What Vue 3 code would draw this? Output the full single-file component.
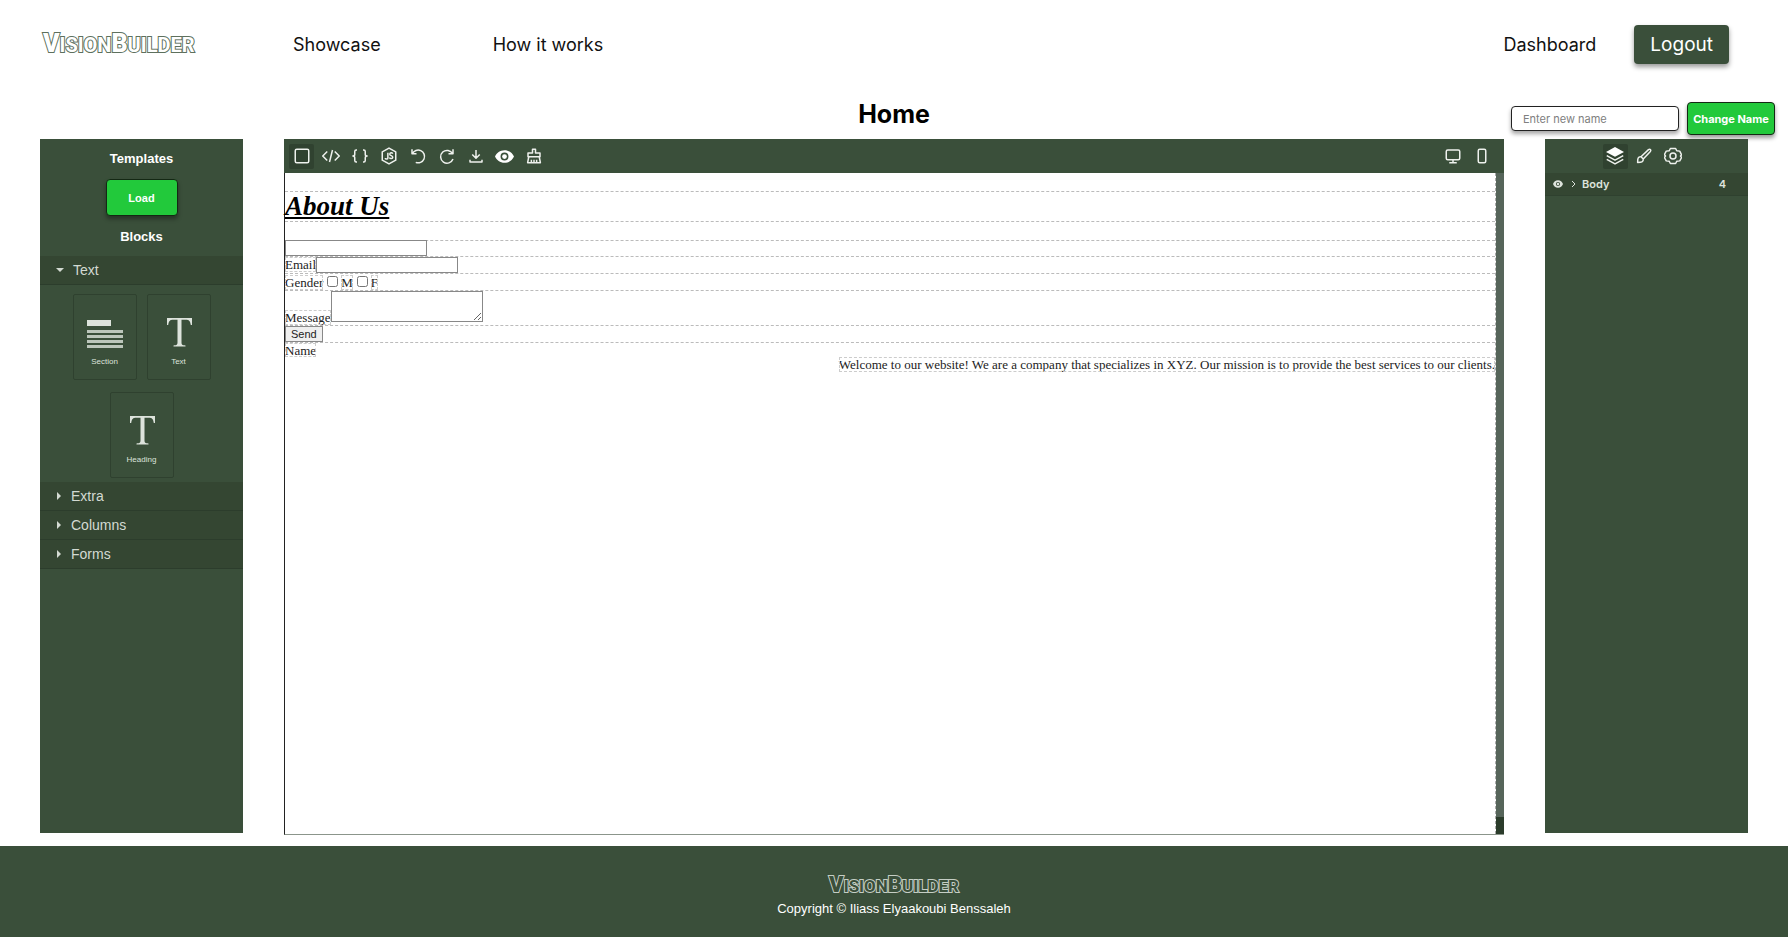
<script setup>
import { ref } from 'vue'

const newName = ref('')
const closedCategories = ['Extra', 'Columns', 'Forms']
</script>

<template>
  <div class="page">
    <header class="header">
      <a class="logo" href="#"><b>V</b>ISION<b>B</b>UILDER</a>
      <nav class="nav">
        <a href="#">Showcase</a>
        <a href="#">How it works</a>
      </nav>
      <div class="account">
        <a href="#">Dashboard</a>
        <button class="logout" type="button">Logout</button>
      </div>
    </header>

    <div class="title-row">
      <h1 class="title">Home</h1>
      <form class="rename" @submit.prevent>
        <input v-model="newName" type="text" placeholder="Enter new name" aria-label="Enter new name" />
        <button type="submit">Change Name</button>
      </form>
    </div>

    <main class="editor">
      <aside class="panel blocks">
        <h2>Templates</h2>
        <button class="load" type="button">Load</button>
        <h2>Blocks</h2>
        <section class="category">
          <button class="category-title open" type="button">
            <svg width="8" height="8" viewBox="0 0 8 8"><path d="M0 2h8L4 6z" /></svg>Text
          </button>
          <div class="tiles">
            <div class="tile">
              <svg width="38" height="38" viewBox="0 0 38 38">
                <path d="M1 5h24v6H1z" />
                <path class="dim" d="M1 15h36v3H1zM1 20h36v3H1zM1 25h36v3H1zM1 30h36v3H1z" />
              </svg>
              <span>Section</span>
            </div>
            <div v-for="name in ['Text', 'Heading']" :key="name" class="tile">
              <svg width="38" height="38" viewBox="0 0 38 38">
                <path d="M7 3h25v7h-1.200c-.6-4-1.800-5.300-5-5.300h-4.300v22.500c0 2.500.7 3 4 3.200V31.500H13.500v-1.100c3.300-.2 4-.7 4-3.200V4.700h-4.300c-3.200 0-4.400 1.300-5 5.300H7z" />
              </svg>
              <span>{{ name }}</span>
            </div>
          </div>
        </section>
        <button v-for="name in closedCategories" :key="name" class="category-title" type="button">
          <svg width="6" height="8" viewBox="0 0 6 8"><path d="M1 0v8l4-4z" /></svg>{{ name }}
        </button>
      </aside>

      <section class="workspace">
        <div class="toolbar">
          <div class="tools">
            <button class="tool active" type="button" aria-label="Outline">
              <svg viewBox="0 0 24 24"><rect x="3" y="3" width="18" height="18" rx="2" /></svg>
            </button>
            <button class="tool" type="button" aria-label="Code">
              <svg viewBox="0 0 24 24"><path d="M7 6l-6 6 6 6M17 6l6 6-6 6M14 4l-4 16" /></svg>
            </button>
            <button class="tool" type="button" aria-label="Styles">
              <svg viewBox="0 0 24 24"><path d="M8 4H7a2 2 0 0 0-2 2v3.500C5 11 4 12 2.500 12 4 12 5 13 5 14.500V18a2 2 0 0 0 2 2h1M16 4h1a2 2 0 0 1 2 2v3.500c0 1.500 1 2.500 2.500 2.500-1.500 0-2.500 1-2.500 2.500V18a2 2 0 0 1-2 2h-1" /></svg>
            </button>
            <button class="tool" type="button" aria-label="Scripts">
              <svg viewBox="0 0 24 24">
                <path d="M12 1.500l9 5v11l-9 5-9-5v-11z" />
                <path d="M10.500 7.500v7c0 2-3.500 2-3.500 0M17 9c-1-2-4-1.500-4 .5 0 2.500 4 1.500 4 4 0 2.500-3.500 2.500-4.500.5" />
              </svg>
            </button>
            <button class="tool" type="button" aria-label="Undo">
              <svg viewBox="0 0 24 24"><path d="M4 3v6h6M4.500 9A8.500 8.500 0 1 1 9 20.500" /></svg>
            </button>
            <button class="tool" type="button" aria-label="Redo">
              <svg viewBox="0 0 24 24"><path d="M20 3v6h-6M19.500 9A8.500 8.500 0 1 0 20 16" /></svg>
            </button>
            <button class="tool" type="button" aria-label="Download">
              <svg viewBox="0 0 24 24"><path d="M12 4v11M7 10l5 5 5-5M4 17v3h16v-3" /></svg>
            </button>
            <button class="tool" type="button" aria-label="Preview">
              <svg class="wide" viewBox="0 0 24 24">
                <path class="solid" fill-rule="evenodd" d="M12 4C6.500 4 2 7.500 0 12c2 4.500 6.500 8 12 8s10-3.500 12-8c-2-4.500-6.500-8-12-8zm0 3a5 5 0 1 1 0 10 5 5 0 0 1 0-10z" />
                <circle class="solid" cx="12" cy="12" r="3" />
              </svg>
            </button>
            <button class="tool" type="button" aria-label="Clear">
              <svg viewBox="0 0 24 24"><path d="M10 8V3h4v5h6v5H4V8zM5 13L3.500 21h17L19 13M8.500 21v-4M12 21v-4M15.500 21v-4" /></svg>
            </button>
          </div>
          <div class="tools">
            <button class="tool" type="button" aria-label="Desktop">
              <svg viewBox="0 0 24 24"><rect x="3" y="4" width="18" height="13" rx="2" /><path d="M12 17v4M7 21h10" /></svg>
            </button>
            <button class="tool" type="button" aria-label="Mobile">
              <svg viewBox="0 0 24 24"><rect x="7" y="3" width="10" height="18" rx="2" /></svg>
            </button>
          </div>
        </div>

        <div class="stage">
          <div class="document">
            <h2>About Us</h2>
            <form @submit.prevent>
              <div class="field first"><input type="text" aria-label="Name" /></div>
              <div class="field email"><label for="email">Email</label><input id="email" type="email" /></div>
              <div class="field gender">
                <span>Gender</span>
                <input id="male" type="checkbox" /><label for="male">M</label>
                <input id="female" type="checkbox" /><label for="female">F</label>
              </div>
              <div class="field message"><label for="message">Message</label><textarea id="message"></textarea></div>
              <div class="field"><button type="submit">Send</button></div>
            </form>
            <div class="name">Name</div>
            <p>Welcome to our website! We are a company that specializes in XYZ. Our mission is to provide the best services to our clients.</p>
          </div>
          <div class="track"><div class="corner"></div></div>
        </div>
      </section>

      <aside class="panel">
        <div class="views">
          <button class="tool active" type="button" aria-label="Layers">
            <svg viewBox="0 0 24 24"><path class="solid" d="M12 0l12 6.500L12 13 0 6.500z" /><path d="M1 11.500l11 6 11-6M1 16.500l11 6 11-6" /></svg>
          </button>
          <button class="tool" type="button" aria-label="Styles">
            <svg viewBox="0 0 24 24"><path d="M8 13L18 3.500c2-1.500 4 .5 2.500 2.500L11 16M8 13c-4-.5-4.500 2.500-4.500 7.500 5 0 8-.5 7.500-4.500zM8 13l3 3" /></svg>
          </button>
          <button class="tool" type="button" aria-label="Settings">
            <svg viewBox="0 0 24 24"><path d="M8.500 2h7l1.500 3 4 .5 2.500 5L22 12l1.500 2-2.500 4.500-4 .5-1.500 3h-7L7 19l-4-.5L.5 14 2 12 .5 10 3 5.500 7 5z" /><circle cx="12" cy="12" r="4" /></svg>
          </button>
        </div>
        <div class="layer">
          <svg width="10" height="10" viewBox="0 0 24 24"><path fill-rule="evenodd" d="M12 3C6 3 2 7 0 12c2 5 6 9 12 9s10-4 12-9c-2-5-6-9-12-9zm0 4a5 5 0 1 1 0 10 5 5 0 0 1 0-10zm0 2a3 3 0 1 0 0 6 3 3 0 0 0 0-6z" /></svg>
          <svg class="chevron" width="6" height="8" viewBox="0 0 6 8"><path d="M1 1l3 3-3 3" /></svg>
          <span>Body</span>
          <span class="count">4</span>
        </div>
      </aside>
    </main>

    <footer class="footer">
      <a class="logo small" href="#"><b>V</b>ISION<b>B</b>UILDER</a>
      <p>Copyright © Iliass Elyaakoubi Benssaleh</p>
    </footer>
  </div>
</template>

<style>
body {
  margin: 0;
  background: #fff;
}
</style>

<style scoped>
* {
  box-sizing: border-box;
}
.page {
  display: flex;
  flex-direction: column;
  min-height: 100vh;
  font-family: Inter, "Liberation Sans", sans-serif;
  color: #000;
}
button {
  font-family: inherit;
  cursor: pointer;
}
h1,
h2,
p {
  margin: 0;
}
.header {
  display: flex;
  align-items: center;
  height: 88px;
  padding: 0 59px 0 43px;
}
.nav a,
.account a {
  color: #111;
  font-size: 18px;
  text-decoration: none;
}
.logo {
  width: 250px;
  font-family: Roboto, sans-serif;
  font-size: 20px;
  font-weight: 700;
  line-height: 30px;
  color: #fff;
  text-decoration: none;
  -webkit-text-stroke: 2px #5d705d;
  paint-order: stroke fill;
}
.logo b {
  font-size: 25px;
}
.nav {
  display: flex;
  flex: 1;
  gap: 112px;
}
.account {
  display: flex;
  align-items: center;
  gap: 38px;
}
.logout {
  height: 39px;
  padding: 0 16px;
  border: 0;
  border-radius: 4px;
  background: #3a4f3a;
  box-shadow: 0 3px 5px rgba(0, 0, 0, 0.4);
  color: #fff;
  font-size: 19px;
}
.title-row {
  display: grid;
  grid-template-columns: 1fr auto 1fr;
  align-items: center;
  height: 51px;
  padding: 0 13px;
}
.title {
  grid-column: 2;
  font-size: 25px;
  font-weight: 700;
}
.rename {
  display: flex;
  justify-content: flex-end;
  align-items: center;
  gap: 8px;
  padding-top: 10px;
}
.rename input {
  width: 168px;
  height: 25px;
  padding: 0 11px;
  border: 1px solid #222;
  border-radius: 4px;
  box-shadow: 0 3px 4px rgba(0, 0, 0, 0.35);
  font-family: inherit;
  font-size: 11px;
}
.rename input::placeholder {
  color: #808080;
}
.rename button {
  width: 88px;
  height: 33px;
  padding: 0;
  border: 1px solid #142814;
  border-radius: 4px;
  background: #22c93b;
  box-shadow: 0 3px 4px rgba(0, 0, 0, 0.4);
  color: #fff;
  font-size: 11px;
  font-weight: 700;
  white-space: nowrap;
}
.editor {
  display: grid;
  grid-template-columns: 203px 1fr 203px;
  flex: 1;
  gap: 41px;
  padding: 0 40px 11px;
}
.panel {
  margin-bottom: 2px;
  background: #3a4f3a;
  color: #dde3dc;
}
.blocks {
  display: flex;
  flex-direction: column;
  font-family: "Liberation Sans", Arial, sans-serif;
}
.blocks h2 {
  color: #fff;
  font-size: 13px;
  line-height: 16px;
  text-align: center;
}
.blocks h2:first-child {
  margin-top: 12px;
}
.load {
  align-self: center;
  width: 72px;
  height: 37px;
  margin: 12px 0 13px;
  border: 1px solid #142814;
  border-radius: 4px;
  background: #22c93b;
  box-shadow: 0 3px 4px rgba(0, 0, 0, 0.35);
  color: #fff;
  font-size: 11px;
  font-weight: 700;
}
.category {
  margin-top: 11px;
}
.category-title {
  display: flex;
  align-items: center;
  gap: 9px;
  width: 100%;
  height: 29px;
  padding: 0 16px;
  border: 0;
  border-bottom: 1px solid #2c3d2c;
  background: #344632;
  color: #d3dad2;
  font-size: 14px;
}
.category-title svg,
.tile svg {
  fill: currentColor;
}
.tiles {
  display: flex;
  flex-wrap: wrap;
  justify-content: center;
  gap: 12px 10px;
  padding: 9px 20px 4px;
}
.tile {
  display: flex;
  flex-direction: column;
  align-items: center;
  gap: 4px;
  width: 64px;
  height: 86px;
  padding-top: 20px;
  border: 1px solid #2f412f;
  border-radius: 2px;
  font-size: 8px;
  line-height: 10px;
}
.dim {
  opacity: 0.8;
}
.workspace {
  display: flex;
  flex-direction: column;
  min-width: 0;
}
.toolbar,
.tools,
.views {
  display: flex;
  align-items: center;
}
.toolbar {
  justify-content: space-between;
  height: 34px;
  padding: 0 10px 0 5px;
  background: #3a4f3a;
}
.tools,
.views {
  gap: 4px;
}
.tool {
  display: flex;
  align-items: center;
  justify-content: center;
  width: 25px;
  height: 25px;
  padding: 0;
  border: 0;
  border-radius: 2px;
  background: transparent;
}
.tool.active {
  background: #304230;
}
.tool svg {
  width: 18px;
  height: 18px;
  fill: none;
  stroke: #eef1ed;
  stroke-width: 2;
  stroke-linejoin: round;
}
.tool .wide {
  width: 19px;
  height: 19px;
}
.tool .solid {
  fill: #fff;
  stroke: none;
}
.stage {
  display: flex;
  flex: 1;
  border-left: 1px solid #222;
  border-bottom: 1px solid #8b958b;
}
.document {
  flex: 1;
  padding-top: 18px;
  border-right: 1px dashed #aaa;
  font-family: "Liberation Serif", "Times New Roman", serif;
  font-size: 13px;
  line-height: 15px;
  color: #222;
}
.document h2 {
  height: 31px;
  margin-bottom: 18px;
  border: 1px dashed #bbb;
  border-width: 1px 0;
  color: #000;
  font-size: 27px;
  font-style: italic;
  line-height: 29px;
  text-decoration: underline;
}
.field {
  display: flex;
  align-items: flex-end;
  height: 17px;
  border-top: 1px dashed #bbb;
}
.field.first {
  height: 16px;
}
.field input {
  width: 142px;
  height: 16px;
  padding: 0 2px;
  border: 1px solid #888;
  background: #fff;
}
.field label,
.field span,
.name,
.document p {
  outline: 1px dashed #ccc;
  outline-offset: -1px;
}
.field.email label {
  align-self: flex-start;
}
.field.gender input {
  width: 11px;
  height: 11px;
  margin: 0 3px 3px 4px;
}
.field.message {
  height: 35px;
}
.message textarea {
  align-self: flex-start;
  width: 152px;
  height: 31px;
  border: 1px solid #888;
}
.field button {
  height: 16px;
  padding: 0 5px;
  border: 1px solid #888;
  background: #efefef;
  color: #222;
  font-family: "Liberation Sans", Arial, sans-serif;
  font-size: 11px;
  line-height: 14px;
}
.document form {
  border-bottom: 1px dashed #bbb;
}
.name {
  width: max-content;
  height: 14px;
}
.document p {
  width: max-content;
  max-width: 100%;
  margin-left: auto;
}
.track {
  display: flex;
  align-items: flex-end;
  width: 8px;
  background: #56655a;
}
.corner {
  width: 100%;
  height: 17px;
  background: #2b3c2b;
}
.views {
  justify-content: center;
  height: 34px;
  padding-right: 5px;
}
.layer {
  display: flex;
  align-items: center;
  height: 23px;
  padding: 0 22px 0 8px;
  border-bottom: 1px solid #2f412f;
  background: #344632;
  font-size: 11px;
  font-weight: 600;
}
.layer svg {
  margin-right: 8px;
  fill: currentColor;
}
.layer .chevron {
  margin-right: 5px;
  fill: none;
  stroke: currentColor;
}
.count {
  margin-left: auto;
}
.footer {
  display: flex;
  flex-direction: column;
  align-items: center;
  height: 91px;
  padding-top: 24px;
  background: #3a4f3a;
  color: #fff;
  font-family: "Liberation Sans", Arial, sans-serif;
  font-size: 13px;
  line-height: 16px;
}
.logo.small {
  width: auto;
  font-size: 17px;
  color: #3a4f3a;
  -webkit-text-stroke-color: #c5cec5;
}
.logo.small b {
  font-size: 22px;
}
</style>
